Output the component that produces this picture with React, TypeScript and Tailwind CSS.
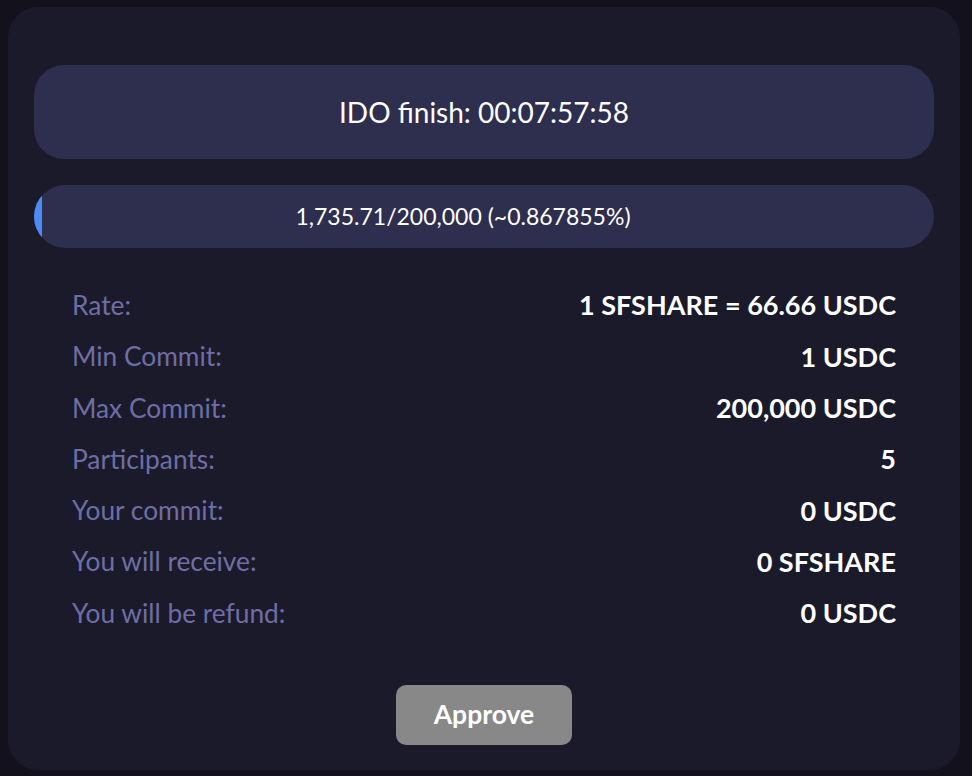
import React from 'react'

const rows: [string, string][] = [
  ['Rate:', '1 SFSHARE = 66.66 USDC'],
  ['Min Commit:', '1 USDC'],
  ['Max Commit:', '200,000 USDC'],
  ['Participants:', '5'],
  ['Your commit:', '0 USDC'],
  ['You will receive:', '0 SFSHARE'],
  ['You will be refund:', '0 USDC'],
]

export default function App() {
  const pct = 0.867855
  return (
    <div
      className="w-[972px] h-[776px] bg-[#12111c] pt-[7px] pl-[8px]"
      style={{ fontFamily: 'Lato, "Noto Sans", sans-serif' }}
    >
      <div className="w-[952px] h-[763px] bg-[#1b1a2a] rounded-[30px] px-[26px] pt-[58px] flex flex-col">
        <div className="h-[94px] rounded-[30px] bg-[#2e2e4e] flex items-center justify-center text-[28px] text-white">
          IDO finish: 00:07:57:58
        </div>

        <div className="relative mt-[26px] h-[63px] rounded-full bg-[#2e2e4e] overflow-hidden flex items-center justify-center pr-[42px]">
          <div
            className="absolute left-0 top-0 h-full bg-[#4a8cf7]"
            style={{ width: `${Math.max(pct, 0.6)}%` }}
          />
          <span className="relative text-[23px] text-white">1,735.71/200,000 (~0.867855%)</span>
        </div>

        <div className="mt-[32px] px-[38px] flex flex-col">
          {rows.map(([label, value]) => (
            <div key={label} className="h-[51.3px] flex items-center justify-between">
              <span className="text-[#6e6ea6] text-[26.3px]">{label}</span>
              <span className="text-white font-bold text-[27px]">{value}</span>
            </div>
          ))}
        </div>

        <div className="mt-[46px] flex justify-center">
          <button className="w-[176px] h-[60px] rounded-[10px] bg-[#888888] text-white text-[26.5px] font-bold">
            Approve
          </button>
        </div>
      </div>
    </div>
  )
}
